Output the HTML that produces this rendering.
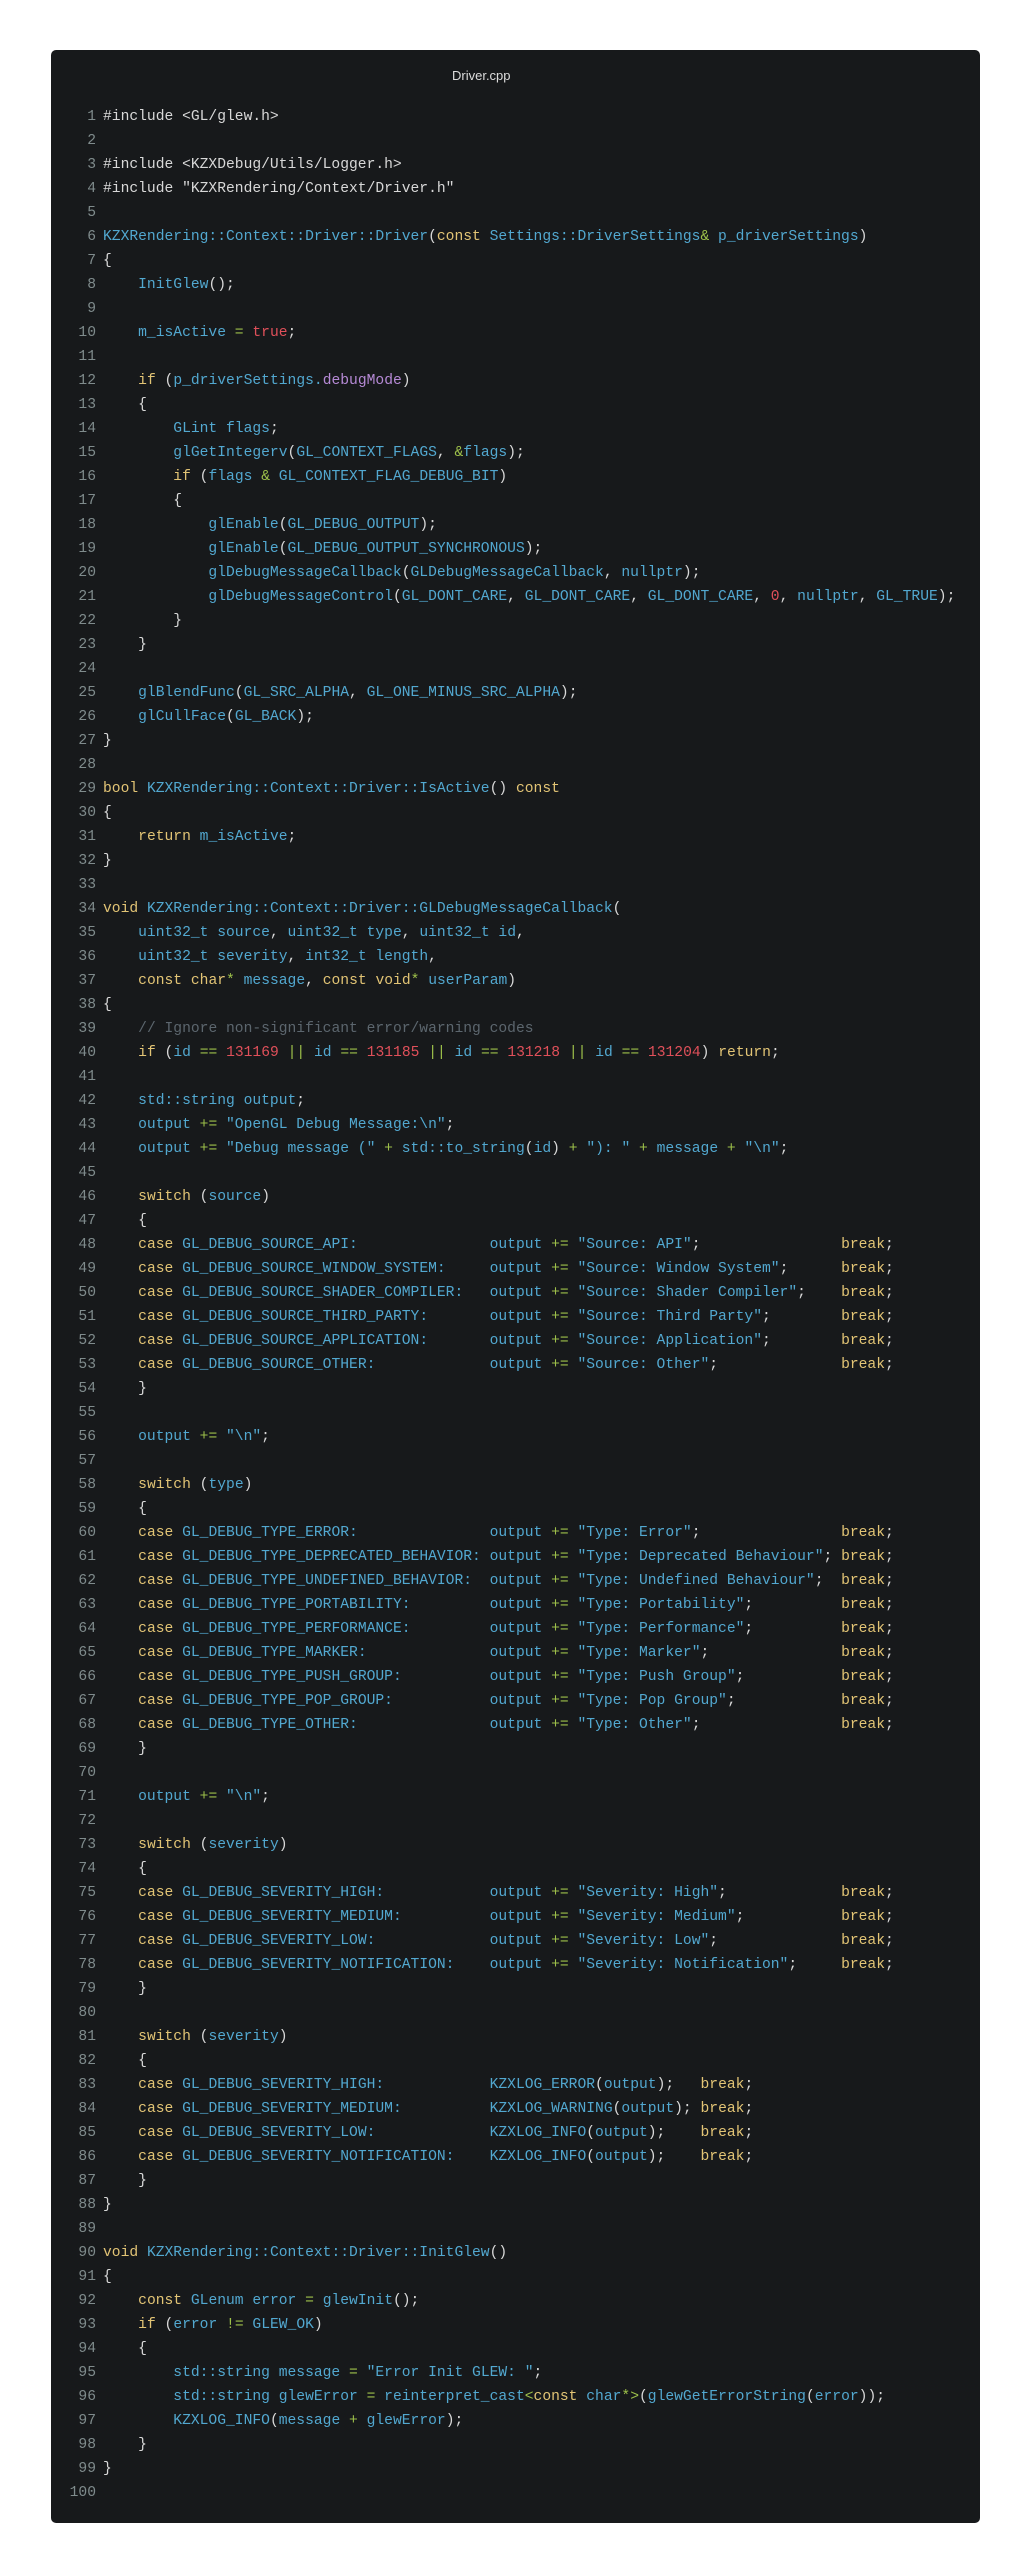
<!DOCTYPE html>
<html><head><meta charset="utf-8">
<style>
html,body{margin:0;padding:0;background:#fff;}
body{width:1024px;height:2573px;position:relative;overflow:hidden;}
.card{position:absolute;left:51px;top:50px;width:929px;height:2473px;background:#17191b;border-radius:5px;}
.title{position:absolute;left:452px;top:68px;font:13px "Liberation Sans",sans-serif;color:#dcdcdc;}
pre{margin:0;font-family:"Liberation Mono",monospace;font-size:14.65px;line-height:24px;position:absolute;top:105px;}
.ln{left:51px;width:45px;text-align:right;color:#7f8b8c;}
.code{left:103px;color:#52a8d0;}
.k{color:#e2c475}.o{color:#9dc04a}.n{color:#e0505a}.c{color:#5c666e}.p{color:#d8d8d8}.v{color:#b68ad6}
</style></head><body>
<div class="card"></div>
<div class="title">Driver.cpp</div>
<pre class="ln">1
2
3
4
5
6
7
8
9
10
11
12
13
14
15
16
17
18
19
20
21
22
23
24
25
26
27
28
29
30
31
32
33
34
35
36
37
38
39
40
41
42
43
44
45
46
47
48
49
50
51
52
53
54
55
56
57
58
59
60
61
62
63
64
65
66
67
68
69
70
71
72
73
74
75
76
77
78
79
80
81
82
83
84
85
86
87
88
89
90
91
92
93
94
95
96
97
98
99
100</pre>
<pre class="code"><span class="p">#include &lt;GL/glew.h&gt;</span>

<span class="p">#include &lt;KZXDebug/Utils/Logger.h&gt;</span>
<span class="p">#include "KZXRendering/Context/Driver.h"</span>

KZXRendering::Context::Driver::Driver<span class="p">(</span><span class="k">const</span> Settings::DriverSettings<span class="o">&amp;</span> p_driverSettings<span class="p">)</span>
<span class="p">{</span>
    InitGlew<span class="p">();</span>

    m_isActive <span class="o">=</span> <span class="n">true</span><span class="p">;</span>

    <span class="k">if</span> <span class="p">(</span>p_driverSettings.<span class="v">debugMode</span><span class="p">)</span>
    <span class="p">{</span>
        GLint flags<span class="p">;</span>
        glGetIntegerv<span class="p">(</span>GL_CONTEXT_FLAGS<span class="p">,</span> <span class="o">&amp;</span>flags<span class="p">);</span>
        <span class="k">if</span> <span class="p">(</span>flags <span class="o">&amp;</span> GL_CONTEXT_FLAG_DEBUG_BIT<span class="p">)</span>
        <span class="p">{</span>
            glEnable<span class="p">(</span>GL_DEBUG_OUTPUT<span class="p">);</span>
            glEnable<span class="p">(</span>GL_DEBUG_OUTPUT_SYNCHRONOUS<span class="p">);</span>
            glDebugMessageCallback<span class="p">(</span>GLDebugMessageCallback<span class="p">,</span> nullptr<span class="p">);</span>
            glDebugMessageControl<span class="p">(</span>GL_DONT_CARE<span class="p">,</span> GL_DONT_CARE<span class="p">,</span> GL_DONT_CARE<span class="p">,</span> <span class="n">0</span><span class="p">,</span> nullptr<span class="p">,</span> GL_TRUE<span class="p">);</span>
        <span class="p">}</span>
    <span class="p">}</span>

    glBlendFunc<span class="p">(</span>GL_SRC_ALPHA<span class="p">,</span> GL_ONE_MINUS_SRC_ALPHA<span class="p">);</span>
    glCullFace<span class="p">(</span>GL_BACK<span class="p">);</span>
<span class="p">}</span>

<span class="k">bool</span> KZXRendering::Context::Driver::IsActive<span class="p">()</span> <span class="k">const</span>
<span class="p">{</span>
    <span class="k">return</span> m_isActive<span class="p">;</span>
<span class="p">}</span>

<span class="k">void</span> KZXRendering::Context::Driver::GLDebugMessageCallback<span class="p">(</span>
    uint32_t source<span class="p">,</span> uint32_t type<span class="p">,</span> uint32_t id<span class="p">,</span>
    uint32_t severity<span class="p">,</span> int32_t length<span class="p">,</span>
    <span class="k">const</span> <span class="k">char</span><span class="o">*</span> message<span class="p">,</span> <span class="k">const</span> <span class="k">void</span><span class="o">*</span> userParam<span class="p">)</span>
<span class="p">{</span>
    <span class="c">// Ignore non-significant error/warning codes</span>
    <span class="k">if</span> <span class="p">(</span>id <span class="o">==</span> <span class="n">131169</span> <span class="o">||</span> id <span class="o">==</span> <span class="n">131185</span> <span class="o">||</span> id <span class="o">==</span> <span class="n">131218</span> <span class="o">||</span> id <span class="o">==</span> <span class="n">131204</span><span class="p">)</span> <span class="k">return</span><span class="p">;</span>

    std::string output<span class="p">;</span>
    output <span class="o">+=</span> "OpenGL Debug Message:\n"<span class="p">;</span>
    output <span class="o">+=</span> "Debug message (" <span class="o">+</span> std::to_string<span class="p">(</span>id<span class="p">)</span> <span class="o">+</span> "): " <span class="o">+</span> message <span class="o">+</span> "\n"<span class="p">;</span>

    <span class="k">switch</span> <span class="p">(</span>source<span class="p">)</span>
    <span class="p">{</span>
    <span class="k">case</span> GL_DEBUG_SOURCE_API:               output <span class="o">+=</span> "Source: API"<span class="p">;</span>                <span class="k">break</span><span class="p">;</span>
    <span class="k">case</span> GL_DEBUG_SOURCE_WINDOW_SYSTEM:     output <span class="o">+=</span> "Source: Window System"<span class="p">;</span>      <span class="k">break</span><span class="p">;</span>
    <span class="k">case</span> GL_DEBUG_SOURCE_SHADER_COMPILER:   output <span class="o">+=</span> "Source: Shader Compiler"<span class="p">;</span>    <span class="k">break</span><span class="p">;</span>
    <span class="k">case</span> GL_DEBUG_SOURCE_THIRD_PARTY:       output <span class="o">+=</span> "Source: Third Party"<span class="p">;</span>        <span class="k">break</span><span class="p">;</span>
    <span class="k">case</span> GL_DEBUG_SOURCE_APPLICATION:       output <span class="o">+=</span> "Source: Application"<span class="p">;</span>        <span class="k">break</span><span class="p">;</span>
    <span class="k">case</span> GL_DEBUG_SOURCE_OTHER:             output <span class="o">+=</span> "Source: Other"<span class="p">;</span>              <span class="k">break</span><span class="p">;</span>
    <span class="p">}</span>

    output <span class="o">+=</span> "\n"<span class="p">;</span>

    <span class="k">switch</span> <span class="p">(</span>type<span class="p">)</span>
    <span class="p">{</span>
    <span class="k">case</span> GL_DEBUG_TYPE_ERROR:               output <span class="o">+=</span> "Type: Error"<span class="p">;</span>                <span class="k">break</span><span class="p">;</span>
    <span class="k">case</span> GL_DEBUG_TYPE_DEPRECATED_BEHAVIOR: output <span class="o">+=</span> "Type: Deprecated Behaviour"<span class="p">;</span> <span class="k">break</span><span class="p">;</span>
    <span class="k">case</span> GL_DEBUG_TYPE_UNDEFINED_BEHAVIOR:  output <span class="o">+=</span> "Type: Undefined Behaviour"<span class="p">;</span>  <span class="k">break</span><span class="p">;</span>
    <span class="k">case</span> GL_DEBUG_TYPE_PORTABILITY:         output <span class="o">+=</span> "Type: Portability"<span class="p">;</span>          <span class="k">break</span><span class="p">;</span>
    <span class="k">case</span> GL_DEBUG_TYPE_PERFORMANCE:         output <span class="o">+=</span> "Type: Performance"<span class="p">;</span>          <span class="k">break</span><span class="p">;</span>
    <span class="k">case</span> GL_DEBUG_TYPE_MARKER:              output <span class="o">+=</span> "Type: Marker"<span class="p">;</span>               <span class="k">break</span><span class="p">;</span>
    <span class="k">case</span> GL_DEBUG_TYPE_PUSH_GROUP:          output <span class="o">+=</span> "Type: Push Group"<span class="p">;</span>           <span class="k">break</span><span class="p">;</span>
    <span class="k">case</span> GL_DEBUG_TYPE_POP_GROUP:           output <span class="o">+=</span> "Type: Pop Group"<span class="p">;</span>            <span class="k">break</span><span class="p">;</span>
    <span class="k">case</span> GL_DEBUG_TYPE_OTHER:               output <span class="o">+=</span> "Type: Other"<span class="p">;</span>                <span class="k">break</span><span class="p">;</span>
    <span class="p">}</span>

    output <span class="o">+=</span> "\n"<span class="p">;</span>

    <span class="k">switch</span> <span class="p">(</span>severity<span class="p">)</span>
    <span class="p">{</span>
    <span class="k">case</span> GL_DEBUG_SEVERITY_HIGH:            output <span class="o">+=</span> "Severity: High"<span class="p">;</span>             <span class="k">break</span><span class="p">;</span>
    <span class="k">case</span> GL_DEBUG_SEVERITY_MEDIUM:          output <span class="o">+=</span> "Severity: Medium"<span class="p">;</span>           <span class="k">break</span><span class="p">;</span>
    <span class="k">case</span> GL_DEBUG_SEVERITY_LOW:             output <span class="o">+=</span> "Severity: Low"<span class="p">;</span>              <span class="k">break</span><span class="p">;</span>
    <span class="k">case</span> GL_DEBUG_SEVERITY_NOTIFICATION:    output <span class="o">+=</span> "Severity: Notification"<span class="p">;</span>     <span class="k">break</span><span class="p">;</span>
    <span class="p">}</span>

    <span class="k">switch</span> <span class="p">(</span>severity<span class="p">)</span>
    <span class="p">{</span>
    <span class="k">case</span> GL_DEBUG_SEVERITY_HIGH:            KZXLOG_ERROR<span class="p">(</span>output<span class="p">);</span>   <span class="k">break</span><span class="p">;</span>
    <span class="k">case</span> GL_DEBUG_SEVERITY_MEDIUM:          KZXLOG_WARNING<span class="p">(</span>output<span class="p">);</span> <span class="k">break</span><span class="p">;</span>
    <span class="k">case</span> GL_DEBUG_SEVERITY_LOW:             KZXLOG_INFO<span class="p">(</span>output<span class="p">);</span>    <span class="k">break</span><span class="p">;</span>
    <span class="k">case</span> GL_DEBUG_SEVERITY_NOTIFICATION:    KZXLOG_INFO<span class="p">(</span>output<span class="p">);</span>    <span class="k">break</span><span class="p">;</span>
    <span class="p">}</span>
<span class="p">}</span>

<span class="k">void</span> KZXRendering::Context::Driver::InitGlew<span class="p">()</span>
<span class="p">{</span>
    <span class="k">const</span> GLenum error <span class="o">=</span> glewInit<span class="p">();</span>
    <span class="k">if</span> <span class="p">(</span>error <span class="o">!=</span> GLEW_OK<span class="p">)</span>
    <span class="p">{</span>
        std::string message <span class="o">=</span> "Error Init GLEW: "<span class="p">;</span>
        std::string glewError <span class="o">=</span> reinterpret_cast<span class="o">&lt;</span><span class="k">const</span> char<span class="o">*&gt;</span><span class="p">(</span>glewGetErrorString<span class="p">(</span>error<span class="p">));</span>
        KZXLOG_INFO<span class="p">(</span>message <span class="o">+</span> glewError<span class="p">);</span>
    <span class="p">}</span>
<span class="p">}</span>
</pre>
</body></html>
